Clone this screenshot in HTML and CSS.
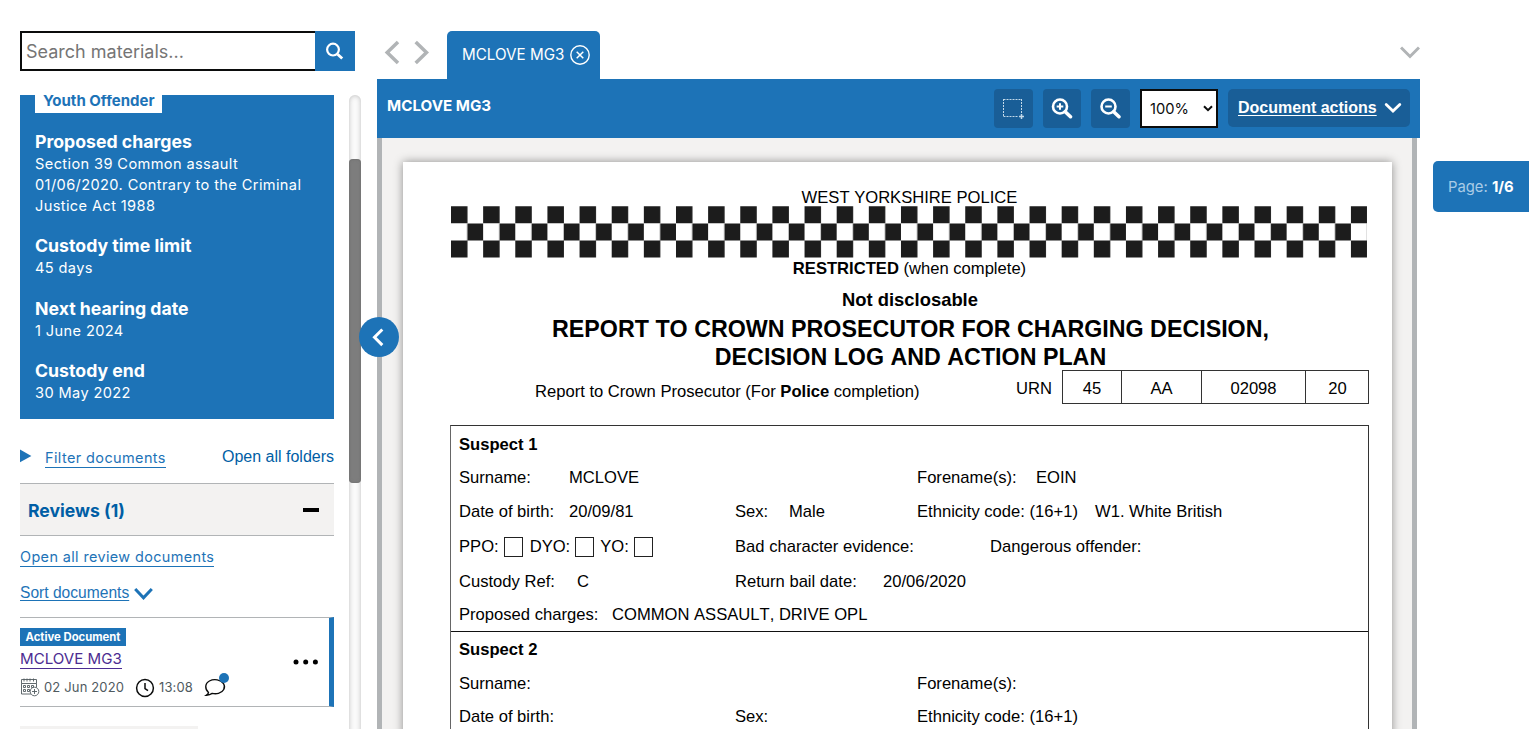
FILE: index.html
```html
<!DOCTYPE html>
<html lang="en">
<head>
<meta charset="utf-8">
<title>Case materials</title>
<link rel="stylesheet" href="styles.css">
</head>
<body>
<div class="app">
  <aside class="sidebar">
    <div class="search">
      <div class="search-input">Search materials...</div>
      <div class="search-btn">
        <svg width="40" height="40" viewBox="0 0 40 40" fill="none" stroke="#fff"><circle cx="18" cy="18.6" r="5.9" stroke-width="2.2"/><path d="M22.6 23.2l4.6 4.4" stroke-width="2.8"/></svg>
      </div>
    </div>
    <div class="scroller">
      <div class="side-content">
        <section class="case-card">
          <div class="tag">Youth Offender</div>
          <div class="fact"><h2>Proposed charges</h2><p>Section 39 Common assault<br>01/06/2020. Contrary to the Criminal<br>Justice Act 1988</p></div>
          <div class="fact"><h2>Custody time limit</h2><p>45 days</p></div>
          <div class="fact"><h2>Next hearing date</h2><p>1 June 2024</p></div>
          <div class="fact"><h2>Custody end</h2><p>30 May 2022</p></div>
        </section>
        <div class="filters">
          <svg width="12" height="14" viewBox="0 0 12 14"><path d="M0 .5L11.4 7 0 13.300z" fill="#1d73b7"/></svg>
          <a class="filter-link">Filter documents</a>
          <a class="open-folders">Open all folders</a>
        </div>
        <div class="folder-head"><span>Reviews (1)</span><i class="minus"></i></div>
        <div class="open-row"><a class="open-review">Open all review documents</a></div>
        <div class="sort-row"><a class="sort">Sort documents</a>
          <svg width="20" height="14" viewBox="0 0 20 14" fill="none" stroke="#1d73b7" stroke-width="3"><path d="M1.200 2l8.300 8.800 8.300-8.800"/></svg>
        </div>
        <article class="doc">
          <div class="doc-main">
            <span class="active">Active Document</span>
            <div class="doc-name"><a class="doc-link">MCLOVE MG3</a></div>
            <div class="meta">
              <svg class="cal" width="20" height="19" viewBox="0 0 20 19" fill="none" stroke="#505a5f" stroke-width=".9"><path d="M1.500 5.500v10.500h9.500M16.500 5.500v4M1.500 1.500h15v4h-15zM4 .5v3M7 .5v3M10 .5v3M13.500 .5v3"/><path d="M3.500 7.500h2v2h-2zM7.500 7.500h2v2h-2zM11.500 7.500h2v2h-2zM3.500 11.500h2v2h-2zM7.500 11.500h2v2h-2z"/><circle cx="14.500" cy="13.500" r="4.300" fill="#fff"/><path d="M14.500 11v5M12 13.500h5"/></svg>
              <span class="date">02 Jun 2020</span>
              <svg class="clock" width="20" height="20" viewBox="0 0 20 20" fill="none" stroke="#0b0c0c" stroke-width="1.500"><circle cx="10" cy="10" r="8.400"/><path d="M10 5v5.500l3 2.200"/></svg>
              <span class="time">13:08</span>
              <svg class="bubble" width="26" height="26" viewBox="0 0 26 26"><path d="M4.500 19.500C.8 16.200.6 10.600 5.400 8c4.800-2.500 11.500-1.300 14.100 2.500 2.500 4-.2 8.700-5 9.900-2.200.6-4.400.5-6.300 0-1.600 1.100-3.400 1.700-5.700 1.800 1.200-.8 1.900-1.700 2-2.700z" fill="none" stroke="#0b0c0c" stroke-width="1.400"/><circle cx="20" cy="5" r="5" fill="#1d73b7"/></svg>
            </div>
          </div>
          <svg class="dots" width="26" height="6" viewBox="0 0 26 6"><circle cx="3" cy="3" r="2.500"/><circle cx="12.700" cy="3" r="2.500"/><circle cx="22.400" cy="3" r="2.500"/></svg>
        </article>
        <div class="next-item"></div>
      </div>
      <div class="track"><div class="thumb"></div></div>
    </div>
  </aside>

  <main class="viewer">
    <div class="tabs">
      <svg class="nav-arrows" width="46" height="26" viewBox="0 0 46 26" fill="none" stroke="#b1b4b6" stroke-width="3.500"><path d="M14 2L3.200 12.500 14 23M31.700 2l10.800 10.500L31.700 23"/></svg>
      <div class="tab">MCLOVE MG3
        <svg width="20" height="20" viewBox="0 0 20 20" fill="none" stroke="#fff"><circle cx="10" cy="10" r="9.200" stroke-width="1.400"/><path d="M6.700 6.700l6.600 6.600M13.300 6.700l-6.600 6.600" stroke-width="1.500"/></svg>
      </div>
      <svg class="tabs-more" width="20" height="14" viewBox="0 0 20 14" fill="none" stroke="#b1b4b6" stroke-width="3"><path d="M1 1.500l9 9 9-9"/></svg>
    </div>
    <div class="toolbar">
      <span class="doc-title">MCLOVE MG3</span>
      <div class="tool"><svg width="21" height="21" viewBox="0 0 21 21" fill="none" stroke="#c3d9e9" stroke-width="1"><path d="M.5 1.500h18" stroke-dasharray="2 1"/><path d="M.5 18.500h15" stroke-dasharray="2 1"/><path d="M.5 1v18" stroke-dasharray="2 1"/><path d="M18.500 1v14" stroke-dasharray="2 1"/><path d="M18.500 16v5M16 18.500h5" stroke-width="1.500"/></svg></div>
      <div class="tool tool-in"><svg width="22" height="22" viewBox="0 0 22 22" fill="none" stroke="#fff"><circle cx="9" cy="8.500" r="7" stroke-width="2.600"/><path d="M14.200 13.700l5.300 5" stroke-width="3.600" stroke-linecap="round"/><path d="M5.700 8.500h6.600M9 5.200v6.600" stroke-width="2"/></svg></div>
      <div class="tool"><svg width="22" height="22" viewBox="0 0 22 22" fill="none" stroke="#fff"><circle cx="8.500" cy="8.500" r="7" stroke-width="2.600"/><path d="M13.700 13.700l5.300 5" stroke-width="3.600" stroke-linecap="round"/><path d="M5.200 8.500h6.600" stroke-width="2"/></svg></div>
      <div class="zoom">100%<svg width="10" height="7" viewBox="0 0 10 7" fill="none" stroke="#0b0c0c" stroke-width="2"><path d="M1 1.200l4 4 4-4"/></svg></div>
      <div class="actions"><span>Document actions</span><svg width="18" height="12" viewBox="0 0 18 12" fill="none" stroke="#fff" stroke-width="2.800" stroke-linecap="round"><path d="M2.200 2.500L9 9l6.800-6.500"/></svg></div>
    </div>
    <div class="canvas">
      <div class="page">
        <div class="line force">WEST YORKSHIRE POLICE</div>
        <svg class="checks" width="917" height="52" viewBox="0 0 917 52">
          <defs><pattern id="check" width="32.140" height="60" patternUnits="userSpaceOnUse"><path d="M0 .3h16.500v17H0zM16.300 17.500h15.840v16.900H16.300zM0 34.600h16.500v17H0z" fill="#1c1c1c"/></pattern></defs>
          <rect width="916" height="52" fill="url(#check)"/>
        </svg>
        <div class="line restricted"><b>RESTRICTED</b> (when complete)</div>
        <div class="not-disclosable">Not disclosable</div>
        <h1>REPORT TO CROWN PROSECUTOR FOR CHARGING DECISION,<br>DECISION LOG AND ACTION PLAN</h1>
        <div class="urn-row">
          <span class="report-to">Report to Crown Prosecutor (For <b>Police</b> completion)</span>
          <span class="urn-label">URN</span>
          <div class="urn"><span>45</span><span>AA</span><span>02098</span><span>20</span></div>
        </div>
        <div class="suspects">
          <div class="suspect">
            <div class="row"><b>Suspect 1</b></div>
            <div class="row up"><span class="w1">Surname:</span><span class="w2">MCLOVE</span><span class="w3"></span><span class="w4">Forename(s):</span><span>EOIN</span></div>
            <div class="row r33"><span class="w1">Date of birth:</span><span class="w2">20/09/81</span><span class="w3"><span class="sex">Sex:</span>Male</span><span class="w5">Ethnicity code: (16+1)</span><span>W1. White British</span></div>
            <div class="row r36"><span class="boxes"><span>PPO:</span><i></i><span class="dyo">DYO:</span><i></i><span class="yo">YO:</span><i></i></span><span class="bad">Bad character evidence:</span><span>Dangerous offender:</span></div>
            <div class="row"><span class="ref">Custody Ref:</span><span class="refv">C</span><span class="bail">Return bail date:</span><span>20/06/2020</span></div>
            <div class="row r33"><span class="charges">Proposed charges:</span><span>COMMON ASSAULT, DRIVE OPL</span></div>
          </div>
          <div class="suspect">
            <div class="row r35"><b>Suspect 2</b></div>
            <div class="row r33"><span class="w1">Surname:</span><span class="w2"></span><span class="w3"></span><span class="w4">Forename(s):</span></div>
            <div class="row up"><span class="w1">Date of birth:</span><span class="w2"></span><span class="w3">Sex:</span><span class="w5">Ethnicity code: (16+1)</span></div>
          </div>
        </div>
      </div>
    </div>
    <div class="collapse"><svg width="40" height="40" viewBox="0 0 40 40" fill="none" stroke="#fff" stroke-width="3"><path d="M23.300 12.500L15.500 20.300l7.800 7.800"/></svg></div>
  </main>
  <div class="pager">Page: <b>1/6</b></div>
</div>
</body>
</html>
```
FILE: styles.css
```css
* { box-sizing: border-box; }
body { margin: 0; background: #fff; font-family: Inter, "Liberation Sans", sans-serif; color: #0b0c0c; }
svg { display: block; flex: none; }
.app { display: flex; height: 729px; overflow: hidden; }

.sidebar { width: 377px; flex: none; padding: 31px 0 0 20px; display: flex; flex-direction: column; }
.search { display: flex; width: 335px; height: 40px; flex: none; }
.search-input { width: 295px; border: 2px solid #0b0c0c; border-right: 0; padding-left: 4px; font-size: 18px; line-height: 37px; color: #757575; }
.search-btn { width: 40px; background: #1d73b7; }
.scroller { display: flex; justify-content: space-between; width: 341px; margin-top: 24px; flex: 1; min-height: 0; }
.side-content { width: 314px; overflow: hidden; }

.case-card { background: #1d73b7; color: #fff; height: 324px; padding: 0 0 0 15px; }
.tag { width: 127px; height: 18px; margin-bottom: 16px; background: #fff; color: #1d73b7; font-weight: 700; font-size: 15px; line-height: 12px; padding-left: 8px; white-space: nowrap; }
.fact { margin-bottom: 16.300px; white-space: nowrap; }
.fact h2 { margin: 0; font-size: 17.700px; line-height: 25px; font-weight: 700; }
.fact p { margin: 0; font-size: 14.600px; letter-spacing: .38px; line-height: 21px; }

.filters { display: flex; align-items: center; height: 64px; padding-top: 14px; }
.filters svg { margin-bottom: 5px; }
.filter-link { margin-left: 13px; font-size: 14.500px; letter-spacing: .38px; line-height: 18px; color: #1d73b7; border-bottom: 1px solid #1d73b7; }
.open-folders { margin-left: auto; font: 16px/18px "Liberation Sans", sans-serif; color: #005ea5; margin-bottom: 2px; }
.folder-head { display: flex; align-items: center; justify-content: space-between; height: 53px; border-top: 1px solid #b1b4b6; border-bottom: 1px solid #b1b4b6; background: #f3f2f1; padding: 2px 15px 0 8px; font-size: 17.600px; font-weight: 700; color: #005ea5; }
.minus { width: 16px; height: 4px; background: #000; margin-bottom: 2px; }
.open-row { display: flex; align-items: flex-end; height: 31px; }
.open-review { font-size: 14.450px; letter-spacing: .37px; line-height: 18px; border-bottom: 1px solid #1d73b7; color: #1d73b7; }
.sort-row { display: flex; align-items: center; height: 50px; padding-top: 1px; font: 15.600px "Liberation Sans", sans-serif; color: #1d73b7; gap: 5px; }
.sort { text-decoration: underline; text-underline-offset: 2px; text-decoration-thickness: 1px; }
.sort-row svg { margin-top: 2px; }

.doc { display: flex; justify-content: space-between; height: 90px; border-top: 1px solid #b1b4b6; border-bottom: 1px solid #b1b4b6; border-right: 5px solid #1d73b7; padding-top: 10px; }
.active { display: block; width: 106px; height: 18px; background: #1d73b7; color: #fff; font-size: 11.300px; font-weight: 700; line-height: 19px; text-align: center; white-space: nowrap; }
.doc-name { display: flex; margin-top: 4px; }
.doc-link { color: #4c2c92; border-bottom: 1px solid #4c2c92; font-size: 15.100px; line-height: 18px; }
.meta { display: flex; align-items: center; height: 26px; margin-top: 5px; font-size: 13px; letter-spacing: .15px; color: #505a5f; }
.date { margin-left: 4px; width: 81px; }
.clock { margin-left: 10px; margin-top: 1px; }
.time { margin-left: 4px; width: 37px; }
.meta .bubble { margin-top: -3px; margin-left: 8px; }
.dots { margin: 31px 10px 0 0; }
.next-item { margin-top: 19px; width: 178px; height: 10px; background: #f3f2f1; }

.track { width: 12px; height: 660px; padding-top: 64px; border-radius: 6px; background: #fafafa; box-shadow: inset 0 0 5px #bdbdbd; }
.thumb { height: 324px; border-radius: 4px; background: #7d7d7d; box-shadow: inset 0 0 3px #6a6a6a; }

.viewer { width: 1043px; flex: none; display: flex; flex-direction: column; padding-top: 31px; position: relative; }
.tabs { display: flex; height: 48px; flex: none; padding-left: 7px; }
.nav-arrows { margin-top: 9px; }
.tab { display: flex; align-items: center; gap: 6px; width: 153px; margin-left: 17px; padding-left: 15px; background: #1d73b7; color: #fff; border-radius: 5px 5px 0 0; font-size: 15.200px; padding-bottom: 1px; }
.tabs-more { margin: 15px 0 0 auto; }
.toolbar { display: flex; align-items: flex-start; height: 59px; flex: none; padding: 10px 10px 0; background: #1d73b7; color: #fff; }
.doc-title { margin-right: auto; font-size: 15.200px; font-weight: 700; line-height: 34px; }
.tool { width: 39px; height: 39px; margin-right: 10px; border-radius: 4px; background: #195e97; display: flex; align-items: center; justify-content: center; }
.tool-in { width: 38px; }
.zoom { width: 78px; height: 39px; margin-right: 10px; border: 2px solid #0b0c0c; background: #fff; color: #0b0c0c; display: flex; align-items: center; justify-content: space-between; padding: 0 3px 0 8px; font-size: 14.700px; }
.actions { display: flex; align-items: center; justify-content: space-between; width: 182px; height: 38px; padding: 0 8px 0 10px; border-radius: 5px; background: #195e97; font: 700 16px "Liberation Sans", sans-serif; white-space: nowrap; }
.actions span { text-decoration: underline; text-underline-offset: 2px; text-decoration-thickness: 1px; }

.canvas { flex: 1; min-height: 0; width: 1040px; overflow: hidden; border: solid #b1b4b6; border-width: 0 5px; background: #f3f2f1; padding: 24px 0 0 21px; }
.page { width: 989px; height: 700px; padding: 26px 23px 0 47px; background: #fff; box-shadow: 0 0 9px rgba(0,0,0,.42); font: 16.600px "Liberation Sans", sans-serif; font-kerning: none; color: #000; }
.line { line-height: 20px; text-align: center; }
.force { height: 18px; }
.checks { margin-left: 1px; }
.restricted { padding-top: 1px; }
.not-disclosable { margin-top: 10px; padding-left: 1px; text-align: center; font-size: 18.400px; font-weight: 700; line-height: 21px; }
.page h1 { margin: 5px 0 0; padding-left: 2px; text-align: center; font-size: 23.250px; line-height: 28px; font-weight: 700; white-space: nowrap; }
.urn-row { display: flex; height: 34px; margin: -1px 0 21px; line-height: 36px; white-space: nowrap; }
.report-to { margin-left: 85px; width: 481px; padding-top: 4px; }
.urn-label { width: 46px; padding-top: 1px; }
.urn { display: grid; grid-template-columns: 59px 80px 104px 64px; width: 307px; height: 34px; border: 1px solid #333; border-left: 0; text-align: center; line-height: 35px; }
.urn span { border-left: 1px solid #333; height: 32px; }
.suspects { border: 1px solid #333; border-left-color: #666; height: 400px; }
.suspects .suspect:first-child { padding-top: 1px; }
.suspect + .suspect { border-top: 1px solid #111; }
.row { display: flex; align-items: center; height: 34px; padding-left: 8px; white-space: nowrap; padding-top: 1px; }
.up { padding: 0 0 1px 8px; }
.r33 { height: 33px; }
.r35 { height: 35px; }
.r36 { height: 36px; }
.w1 { width: 110px; }
.w2 { width: 166px; }
.w3 { width: 182px; }
.w4 { width: 119px; }
.w5 { width: 178px; }
.sex { display: inline-block; width: 54px; }
.boxes { display: flex; align-items: center; width: 276px; }
.boxes i { width: 19px; height: 20px; border: 1.500px solid #222; margin-left: 5px; }
.dyo { margin-left: 7px; }
.yo { margin-left: 6px; }
.bad { width: 255px; }
.ref { width: 118px; }
.refv { width: 158px; }
.bail { width: 148px; }
.charges { width: 153px; }

.collapse { position: absolute; left: -18px; top: 317px; width: 40px; height: 40px; border-radius: 50%; background: #1d73b7; }
.pager { margin: 161px 0 0 auto; width: 96px; height: 51px; border-radius: 5px 0 0 5px; background: #1d73b7; color: #a9cbe6; font-size: 14.800px; line-height: 52px; padding-left: 15px; white-space: nowrap; }
.pager b { color: #fff; }
```
